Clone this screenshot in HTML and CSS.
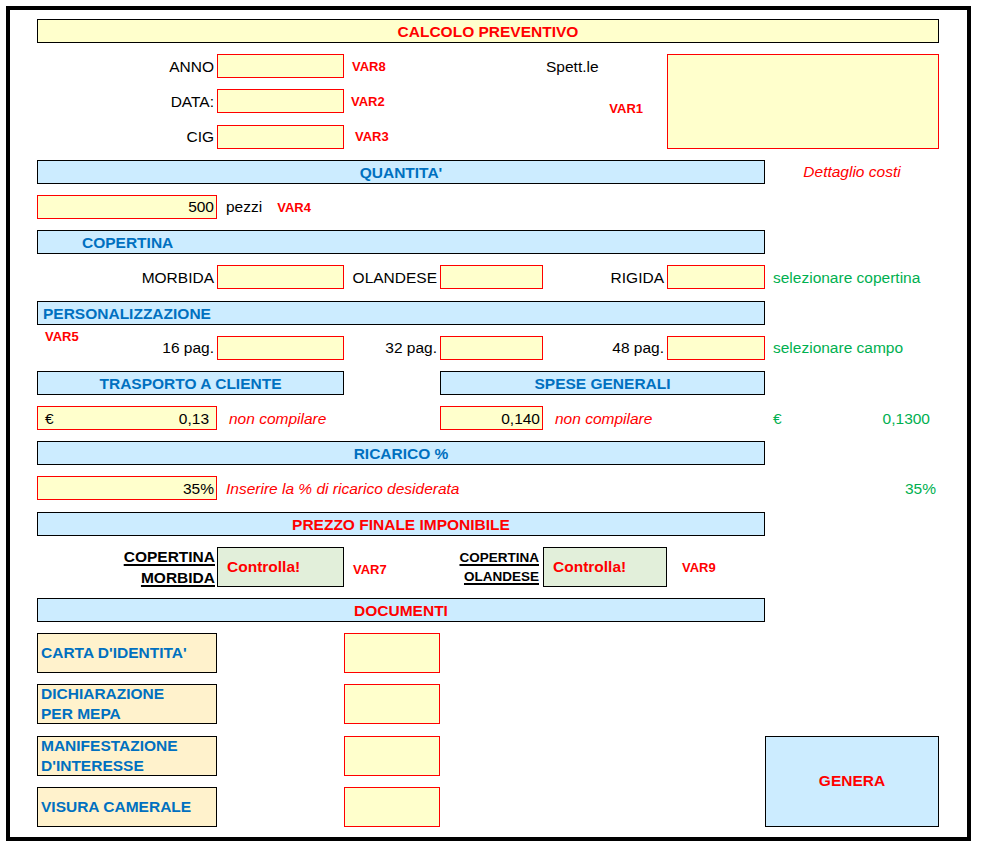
FILE: index.html
```html
<!DOCTYPE html>
<html lang="it">

<head>
  <meta charset="UTF-8">
  <title>Calcolo preventivo</title>
  <link rel="stylesheet" href="styles.css">
</head>

<body>
  <div class="frame">
    <div class="sheet">
      <!-- intestazione -->
      <div class="title c1 s7">CALCOLO PREVENTIVO</div>

      <div class="lbl c1">ANNO</div>
      <div class="inp c2"></div>
      <div class="var c3">VAR8</div>
      <div class="txt c5">Spett.le</div>
      <div class="inp c6 s2 r3"></div>

      <div class="lbl c1">DATA:</div>
      <div class="inp c2"></div>
      <div class="var c3 var2">VAR2</div>
      <div class="var c5 var1">VAR1</div>

      <div class="lbl c1">CIG</div>
      <div class="inp c2"></div>
      <div class="var c3 var3">VAR3</div>

      <!-- quantita -->
      <div class="hdr c1 s6">QUANTITA'</div>
      <div class="note center c7">Dettaglio costi</div>

      <div class="inp num c1">500</div>
      <div class="txt pezzi c2">pezzi <span class="var">VAR4</span></div>

      <!-- copertina -->
      <div class="hdr hdr-a c1 s6">COPERTINA</div>

      <div class="lbl c1">MORBIDA</div>
      <div class="inp c2"></div>
      <div class="lbl c3">OLANDESE</div>
      <div class="inp c4"></div>
      <div class="lbl c5">RIGIDA</div>
      <div class="inp c6"></div>
      <div class="txt green c7">selezionare copertina</div>

      <!-- personalizzazione -->
      <div class="hdr hdr-left c1 s6">PERSONALIZZAZIONE</div>

      <div class="lbl split c1"><span class="var var5">VAR5</span><span>16 pag.</span></div>
      <div class="inp c2"></div>
      <div class="lbl c3">32 pag.</div>
      <div class="inp c4"></div>
      <div class="lbl c5">48 pag.</div>
      <div class="inp c6"></div>
      <div class="txt green c7">selezionare campo</div>

      <!-- costi -->
      <div class="hdr c1 s2">TRASPORTO A CLIENTE</div>
      <div class="hdr c4 s3">SPESE GENERALI</div>

      <div class="inp money c1"><span>€</span><span>0,13</span></div>
      <div class="note nc c2">non compilare</div>
      <div class="inp num c4">0,140</div>
      <div class="note nc c5">non compilare</div>
      <div class="txt green money-g c7"><span>€</span><span>0,1300</span></div>

      <!-- ricarico -->
      <div class="hdr c1 s6">RICARICO %</div>

      <div class="inp num c1">35%</div>
      <div class="note ins c2 s4">Inserire la % di ricarico desiderata</div>
      <div class="txt green perc c7">35%</div>

      <!-- prezzo finale -->
      <div class="hdr red c1 s6">PREZZO FINALE IMPONIBILE</div>

      <div class="cop c1"><span>COPERTINA</span><span>MORBIDA</span></div>
      <div class="res c2">Controlla!</div>
      <div class="var var7 c3">VAR7</div>
      <div class="cop small c4"><span>COPERTINA</span><span>OLANDESE</span></div>
      <div class="res c5">Controlla!</div>
      <div class="var var9 c6">VAR9</div>

      <!-- documenti -->
      <div class="hdr red c1 s6">DOCUMENTI</div>

      <div class="doc c1">CARTA D'IDENTITA'</div>
      <div class="inp c3"></div>

      <div class="doc c1">DICHIARAZIONE<br>PER MEPA</div>
      <div class="inp c3"></div>

      <div class="doc c1">MANIFESTAZIONE<br>D'INTERESSE</div>
      <div class="inp c3"></div>
      <div class="btn c7 r2">GENERA</div>

      <div class="doc c1">VISURA CAMERALE</div>
      <div class="inp c3"></div>
    </div>
  </div>
</body>

</html>
```

FILE: styles.css
```css
* {
  margin: 0;
  padding: 0;
  box-sizing: border-box;
}

body {
  background: #fff;
  color: #000;
  font-family: "Liberation Sans", Arial, sans-serif;
  font-size: 15.5px;
}

.frame {
  margin: 6px 0 0 6px;
  width: 965px;
  height: 835px;
  border: 4px solid #000;
}

/* foglio: colonne A..G come nel file excel */
.sheet {
  display: grid;
  grid-template-columns: 180px 127px 96px 103px 124px 98px 174px;
  grid-template-rows: repeat(15, 24px) 40px 24px repeat(4, 40px);
  row-gap: 11.2px;
  padding: 9px 0 0 27px;
}

.sheet > div {
  display: flex;
  align-items: center;
  white-space: nowrap;
  min-width: 0;
}

.c1 { grid-column-start: 1; }
.c2 { grid-column-start: 2; }
.c3 { grid-column-start: 3; }
.c4 { grid-column-start: 4; }
.c5 { grid-column-start: 5; }
.c6 { grid-column-start: 6; }
.c7 { grid-column-start: 7; }

.s2 { grid-column-end: span 2; }
.s3 { grid-column-end: span 3; }
.s4 { grid-column-end: span 4; }
.s6 { grid-column-end: span 6; }
.s7 { grid-column-end: span 7; }

.r2 { grid-row-end: span 2; }
.r3 { grid-row-end: span 3; }

.title {
  justify-content: center;
  padding-top: 2px;
  background: #ffffcc;
  border: 1px solid #000;
  color: #f00;
  font-weight: bold;
}

.hdr {
  justify-content: center;
  padding-top: 2px;
  background: #ccecff;
  border: 1px solid #000;
  color: #0070c0;
  font-weight: bold;
}

.hdr.red {
  color: #f00;
}

.hdr-a {
  justify-content: flex-start;
  padding-left: 44px;
}

.hdr-left {
  justify-content: flex-start;
  padding-left: 5px;
}

.inp {
  padding-top: 1px;
  background: #ffffcc;
  border: 1px solid #f00;
}

.inp.num {
  justify-content: flex-end;
  padding-right: 2px;
}

.inp.money {
  justify-content: space-between;
  padding: 1px 7px 0 7px;
}

.lbl {
  justify-content: flex-end;
  padding-top: 1px;
  padding-right: 3px;
}

.lbl.split {
  justify-content: space-between;
}

.txt {
  padding-top: 1px;
  padding-left: 3px;
}

.var {
  padding-left: 8px;
  color: #f00;
  font-size: 13px;
  font-weight: bold;
}

.var2 { padding-left: 7px; }
.var3 { padding-left: 11px; }
.var7 { padding-left: 9px; padding-top: 6px; }
.var9 { padding-left: 15px; padding-top: 2px; }

.var1 {
  justify-content: flex-end;
  padding-right: 24px;
  align-self: end;
  margin-bottom: -3px;
}

.var5 {
  align-self: flex-start;
  margin-top: -8px;
}

.pezzi {
  padding-left: 9px;
}

.pezzi .var {
  padding-left: 15px;
}

.note {
  padding-top: 1px;
  color: #f00;
  font-style: italic;
}

.note.center {
  justify-content: center;
}

.note.nc {
  padding-left: 12px;
}

.note.ins {
  padding-left: 9px;
}

.green {
  color: #00b050;
  padding-left: 8px;
}

.money-g {
  justify-content: space-between;
  padding-right: 9px;
}

.perc {
  justify-content: flex-end;
  padding-right: 3px;
}

.cop {
  flex-direction: column;
  justify-content: center;
  padding-right: 2px;
  font-weight: bold;
  line-height: 21px;
}

.sheet > .cop {
  align-items: flex-end;
}

.cop span {
  text-decoration: underline;
  text-decoration-thickness: 2px;
  text-underline-offset: 2px;
}

.cop.small {
  padding-right: 4px;
  font-size: 13.5px;
  line-height: 19px;
}

.res {
  padding-left: 9px;
  background: #e2efda;
  border: 1px solid #000;
  color: #f00;
  font-weight: bold;
}

.doc {
  padding-left: 3px;
  background: #fff2cc;
  border: 1px solid #000;
  color: #0070c0;
  font-weight: bold;
  line-height: 20px;
}

.btn {
  justify-content: center;
  background: #ccecff;
  border: 1px solid #000;
  color: #f00;
  font-weight: bold;
}
```
